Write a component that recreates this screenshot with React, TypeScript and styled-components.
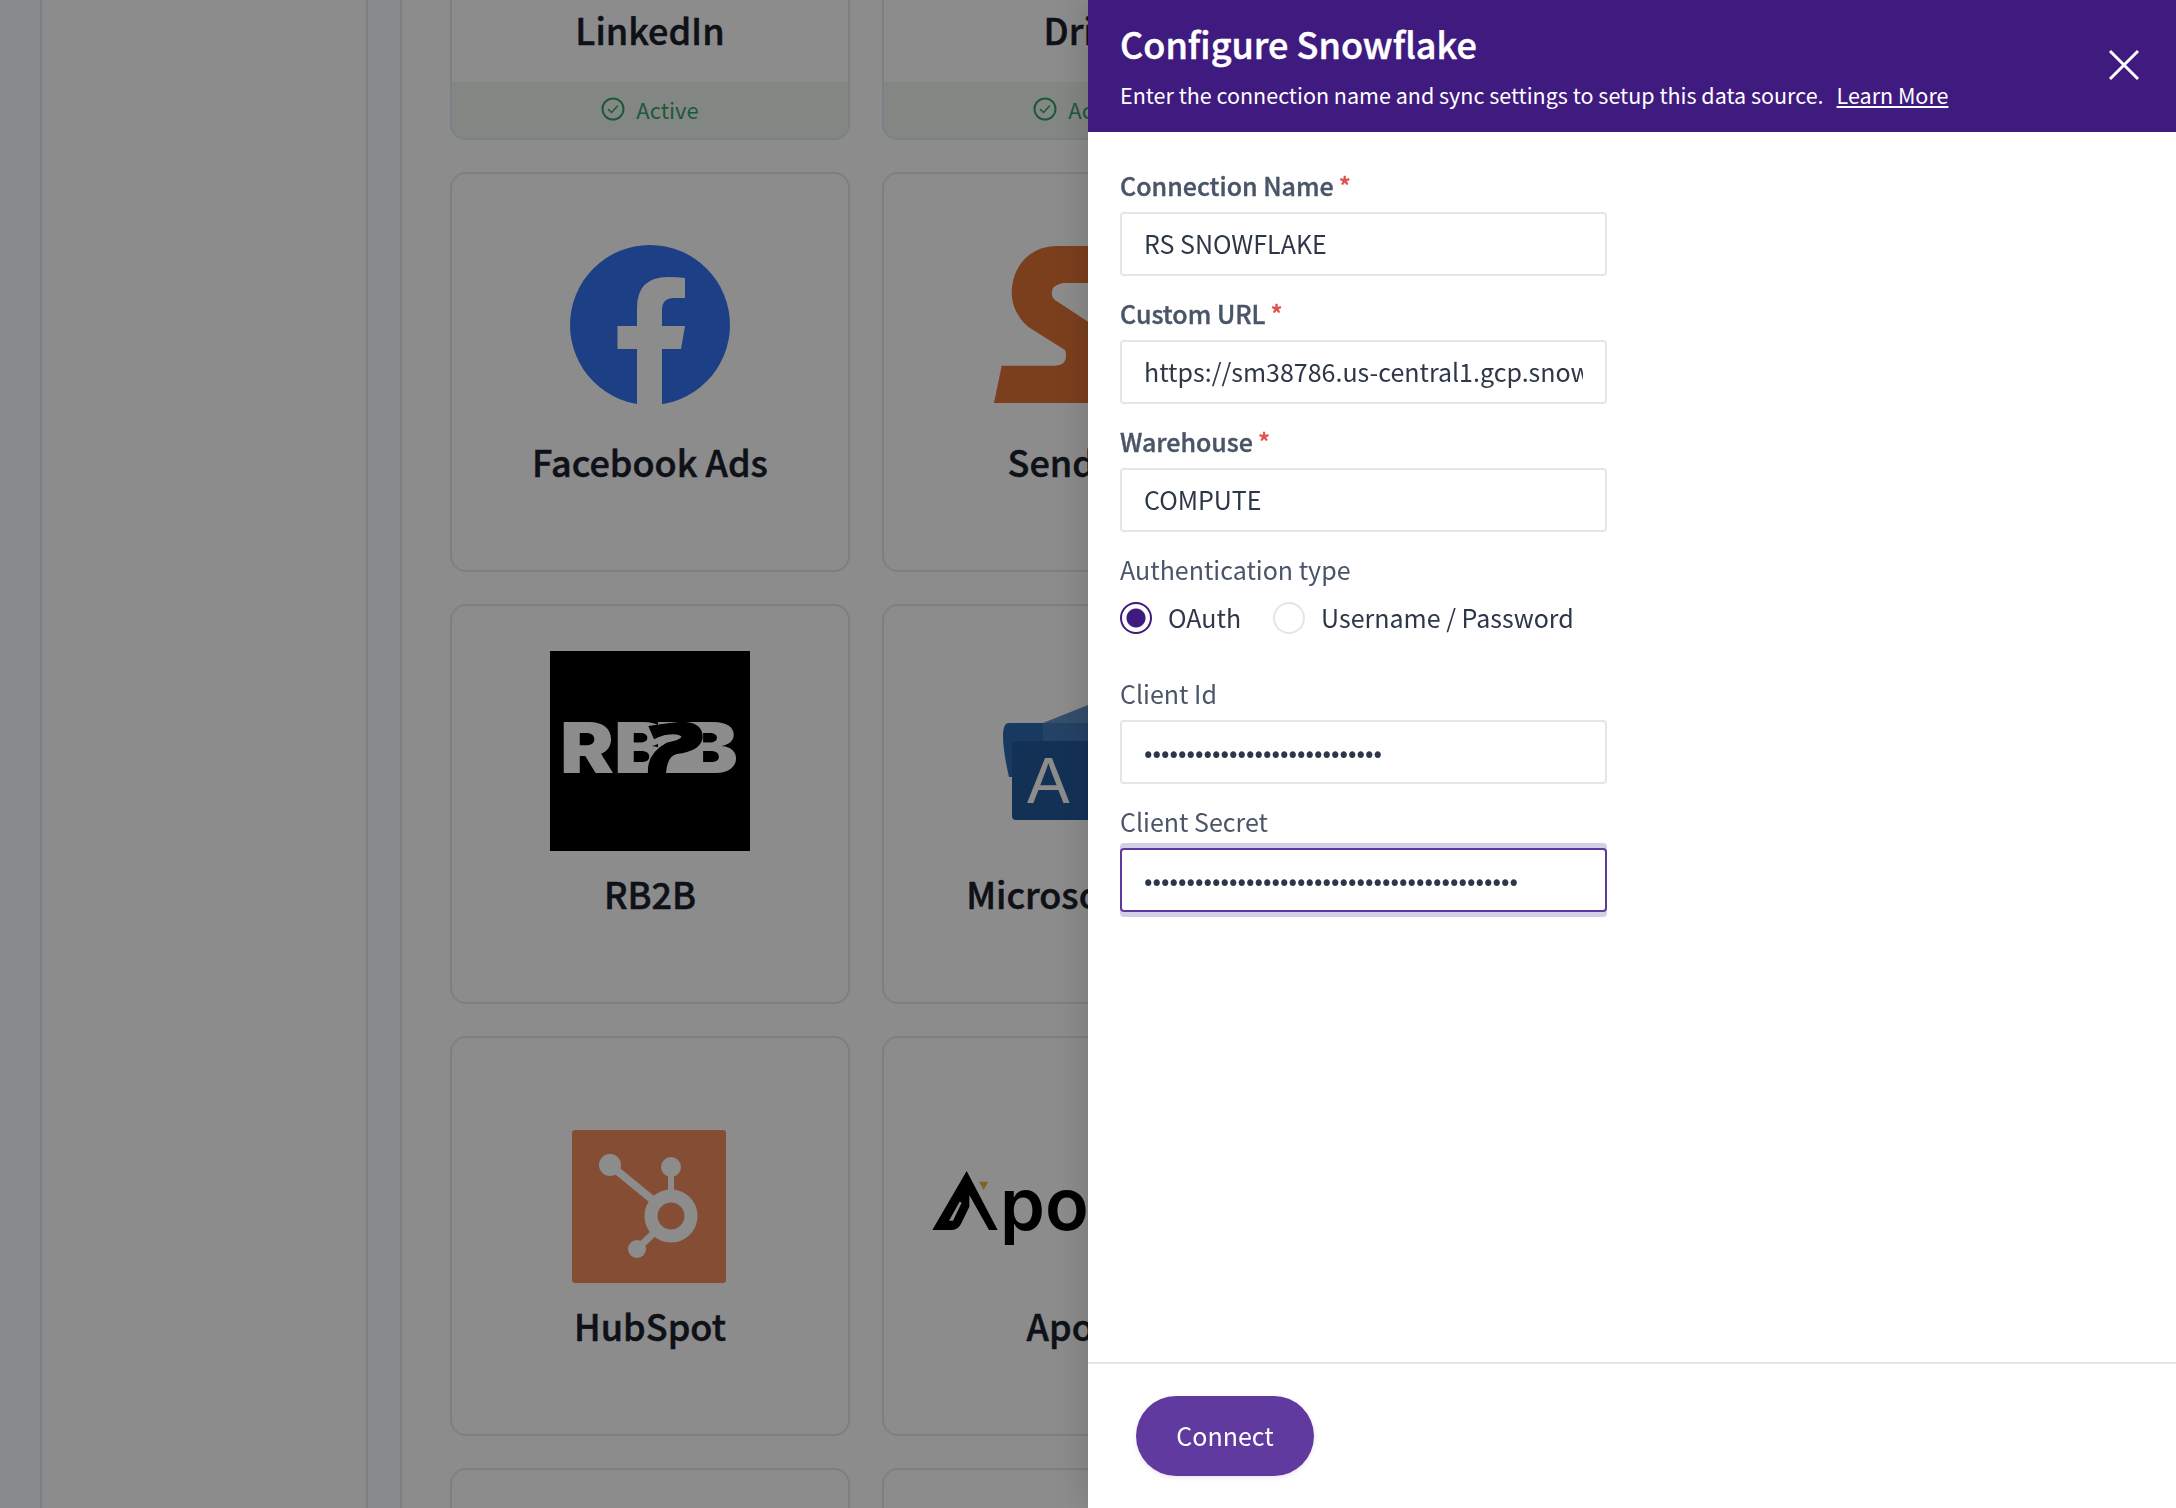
import React from 'react';
import styled, { createGlobalStyle } from 'styled-components';

const Global = createGlobalStyle`
  html, body { margin: 0; padding: 0; height: 100%; background: #fff; }
  body { font-family: "Noto Sans CJK JP", "Open Sans", sans-serif; overflow: hidden; }
  * { box-sizing: border-box; }
`;

const Page = styled.div`
  display: flex;
  height: 1508px;
  overflow: hidden;
  background: #f7fafc;
`;
const Rail = styled.div`
  width: 42px;
  flex: none;
  border-right: 2px solid #e2e8f0;
`;
const Sidebar = styled.div`
  width: 326px;
  flex: none;
  background: #fff;
  border-right: 2px solid #e2e8f0;
`;
const Gutter = styled.div`
  width: 34px;
  flex: none;
  border-right: 2px solid #e2e8f0;
`;
const Content = styled.main`
  flex: 1;
  background: #fff;
  padding: 0 0 0 48px;
  overflow: hidden;
`;
const Grid = styled.div`
  display: grid;
  grid-template-columns: repeat(2, 400px);
  grid-auto-rows: 400px;
  column-gap: 32px;
  row-gap: 32px;
  margin-top: -260px;
`;
const Card = styled.article`
  display: flex;
  flex-direction: column;
  align-items: center;
  border: 2px solid #e2e8f0;
  border-radius: 16px;
  overflow: hidden;
  background: #fff;
`;
const LogoSlot = styled.div`
  height: 200px;
  margin-top: 45px;
  flex: none;
  display: flex;
  justify-content: center;
`;
const LogoSvg = styled.svg`
  display: block;
  overflow: visible;
  flex: none;
`;
const CardName = styled.h3`
  margin: 20px 0 0;
  font-size: 36px;
  line-height: 44px;
  font-weight: 500;
  -webkit-text-stroke: 0.5px currentColor;
  color: #1a202c;
  white-space: nowrap;
`;
const StatusBand = styled.div`
  margin-top: auto;
  align-self: stretch;
  height: 56px;
  padding-bottom: 3px;
  display: flex;
  align-items: center;
  justify-content: center;
  gap: 11px;
  background: #eff6f0;
  color: #38a169;
  font-size: 22px;
`;
const Overlay = styled.div`
  position: fixed;
  inset: 0;
  background: rgba(0, 0, 0, 0.45);
`;
const Drawer = styled.aside`
  position: fixed;
  top: 0;
  right: 0;
  bottom: 0;
  width: 1088px;
  display: flex;
  flex-direction: column;
  background: #fff;
  box-shadow: -6px 0 32px rgba(0, 0, 0, 0.14);
`;
const DrawerHeader = styled.header`
  position: relative;
  height: 132px;
  flex: none;
  padding: 20px 32px 0;
  background: #3f1a7f;
  color: #fff;
`;
const Title = styled.h2`
  margin: 0;
  font-size: 36px;
  line-height: 46px;
  font-weight: 500;
  -webkit-text-stroke: 0.5px currentColor;
`;
const Subtitle = styled.p`
  margin: 13px 0 0;
  font-size: 21.5px;
  line-height: 32px;
  white-space: nowrap;
`;
const LearnMore = styled.a`
  margin-left: 13px;
  color: #fff;
  text-decoration: underline;
`;
const CloseButton = styled.button`
  position: absolute;
  top: 48px;
  right: 35px;
  width: 34px;
  height: 34px;
  padding: 0;
  border: 0;
  background: none;
  color: #fff;
`;
const DrawerBody = styled.form`
  flex: 1;
  padding: 36px 32px 0;
  display: flex;
  flex-direction: column;
  gap: 20px;
  width: 551px;
  overflow: hidden;
`;
const Field = styled.div`
  display: flex;
  flex-direction: column;
`;
const Label = styled.label<{ $strong?: boolean }>`
  font-size: 25px;
  line-height: 34px;
  margin-bottom: 10px;
  font-weight: ${p => (p.$strong ? 500 : 400)};
  -webkit-text-stroke: ${p => (p.$strong ? '0.4px currentColor' : '0')};
  color: #4a5568;
`;
const Star = styled.span`
  color: #e2504c;
  margin-left: 5px;
`;
const TextInput = styled.input<{ $focused?: boolean }>`
  width: 487px;
  height: 64px;
  padding: 0 22px 2px;
  font-family: inherit;
  font-size: 25px;
  color: #2d3748;
  background: #fff;
  border: 2px solid ${p => (p.$focused ? '#5b3a9e' : '#e2e5ea')};
  border-radius: 4px;
  outline: none;
  box-shadow: ${p => (p.$focused ? '0 5px 0 #d6cde6, 0 -5px 0 #d6cde6' : 'none')};
`;
const RadioRow = styled.div`
  display: flex;
  align-items: center;
  height: 44px;
  margin-bottom: 16px;
`;
const RadioItem = styled.div`
  display: flex;
  align-items: center;
  gap: 16px;
  margin-right: 32px;
  padding-bottom: 2px;
  font-size: 25px;
  line-height: 36px;
  color: #2d3748;
  white-space: nowrap;
`;
const RadioDot = styled.span<{ $on?: boolean }>`
  width: 32px;
  height: 32px;
  margin-bottom: -2px;
  flex: none;
  border-radius: 50%;
  border: 2px solid ${p => (p.$on ? '#3f1a7f' : '#e2e5ea')};
  background: ${p => (p.$on ? 'radial-gradient(circle, #3f1a7f 0 9px, #fff 10px)' : '#fff')};
`;
const DrawerFooter = styled.footer`
  flex: none;
  height: 146px;
  padding: 32px 48px;
  border-top: 2px solid #e2e5ea;
`;
const ConnectButton = styled.button`
  width: 178px;
  height: 80px;
  padding: 0 0 2px;
  border: 0;
  border-radius: 40px;
  background: #613a9f;
  color: #fff;
  font-family: inherit;
  font-size: 25px;
  box-shadow: 0 2px 4px rgba(97, 58, 159, 0.12);
`;

const Logo = ({ w = 200, children }: { w?: number; children?: React.ReactNode }) => (
  <LogoSlot>
    <LogoSvg width={w} height={200} viewBox={`0 0 ${w} 200`}>{children}</LogoSvg>
  </LogoSlot>
);

const FacebookLogo = () => (
  <Logo>
    <circle cx="100" cy="106" r="80" fill="#3674f2" />
    <path d="M87 187V130H67.5V107H87V89Q87 58 118 58Q128 58 135 59V79H124Q112 79 112 91V107H135L131 130H112V187Z" fill="#fff" />
  </Logo>
);
const SendosoLogo = () => (
  <Logo>
    <path d="M12 184L19.7 146.7H73Q84 146 84 137.7Q84 133 83 131L48 109C38 102 29.7 88 29.7 74C30 45 50 27 74.7 27H120V64H81Q69.7 66 69.7 74Q70 79 73 81L120 112V184Z" fill="#e07335" />
  </Logo>
);
const Rb2bLogo = () => (
  <Logo>
    <rect width="200" height="200" fill="#000" />
    <text x="10" y="122" fontFamily="Inter" fontWeight="900" fontSize="70" fill="#fff" textLength="108" lengthAdjust="spacingAndGlyphs">RB</text>
    <text x="133" y="122" fontFamily="Inter" fontWeight="900" fontSize="70" fill="#fff" textLength="55" lengthAdjust="spacingAndGlyphs">B</text>
    <rect x="108" y="71" width="34" height="51" fill="#fff" />
    <g transform="translate(30 39) scale(0.3333)">
      <path d="M205 108Q270 97 310 95Q370 97 368 145Q360 185 290 192Q262 198 258 249H204Q200 190 260 158Q300 150 305 140Q295 128 255 135Q235 140 222 148Z" fill="#000" />
    </g>
  </Logo>
);
const AccessLogo = () => (
  <Logo>
    <path d="M61 72L106 54H230V120H61Z" fill="#5f8fc4" />
    <path d="M27 72H61V126H27Q21 100 21 85Q21 72 27 72Z" fill="#2f6bb0" />
    <rect x="61" y="72" width="170" height="40" fill="#4079b8" />
    <rect x="30" y="90" width="130" height="79" rx="4" fill="#235a9c" />
    <text x="45" y="152" fontFamily="Liberation Sans" fontSize="64" fill="#fff">A</text>
  </Logo>
);
const HubSpotLogo = () => (
  <Logo>
    <rect x="22" y="47" width="154" height="153" rx="3" fill="#f38f60" />
    <circle cx="121" cy="133" r="20" fill="none" stroke="#fff" strokeWidth="13" />
    <circle cx="121" cy="84" r="10" fill="#fff" />
    <rect x="118" y="84" width="6" height="28" fill="#fff" />
    <circle cx="60" cy="82" r="11" fill="#fff" />
    <path d="M60 82L104 118" stroke="#fff" strokeWidth="8" />
    <circle cx="87" cy="166" r="9" fill="#fff" />
    <path d="M87 166L106 148" stroke="#fff" strokeWidth="7" />
  </Logo>
);
const ApolloLogo = () => (
  <Logo w={300}>
    <g transform="translate(-7 77) scale(0.3333)">
      <path d="M125 33L218 210H192L133 105V140L108 192Q98 210 78 210H22Z" fill="#000" />
      <path d="M72 182L104 125L110 128L84 182Z" fill="#fff" />
      <path d="M162 65H190L176 90Z" fill="#e4b94a" />
    </g>
    <text x="68" y="147" fontFamily="Inter" fontWeight="600" fontSize="72" fill="#000">pollo</text>
  </Logo>
);

const ActiveBadge = () => (
  <StatusBand>
    <svg width="24" height="24" viewBox="0 0 24 24" fill="none" stroke="currentColor" strokeWidth="2" strokeLinecap="round" strokeLinejoin="round">
      <circle cx="12" cy="12" r="10.5" />
      <path d="M7.5 12.5L10.5 15.5L16.5 9" strokeWidth="1.6" />
    </svg>
    Active
  </StatusBand>
);

const App = () => (
  <>
    <Global />
    <Page>
      <Rail />
      <Sidebar />
      <Gutter />
      <Content>
        <Grid>
          <Card><Logo /><CardName>LinkedIn</CardName><ActiveBadge /></Card>
          <Card><Logo /><CardName>Drift</CardName><ActiveBadge /></Card>
          <Card><FacebookLogo /><CardName>Facebook Ads</CardName></Card>
          <Card><SendosoLogo /><CardName>Sendoso</CardName></Card>
          <Card><Rb2bLogo /><CardName>RB2B</CardName></Card>
          <Card><AccessLogo /><CardName>Microsoft Ads</CardName></Card>
          <Card><HubSpotLogo /><CardName>HubSpot</CardName></Card>
          <Card><ApolloLogo /><CardName>Apollo</CardName></Card>
          <Card />
          <Card />
        </Grid>
      </Content>
    </Page>
    <Overlay />
    <Drawer>
      <DrawerHeader>
        <Title>Configure Snowflake</Title>
        <Subtitle>
          Enter the connection name and sync settings to setup this data source.
          <LearnMore href="#">Learn More</LearnMore>
        </Subtitle>
        <CloseButton type="button" aria-label="Close">
          <svg width="34" height="34" viewBox="0 0 34 34" fill="none" stroke="currentColor" strokeWidth="3">
            <path d="M3 3L31 31M31 3L3 31" />
          </svg>
        </CloseButton>
      </DrawerHeader>
      <DrawerBody>
        <Field>
          <Label $strong>Connection Name<Star>*</Star></Label>
          <TextInput readOnly value="RS SNOWFLAKE" />
        </Field>
        <Field>
          <Label $strong>Custom URL<Star>*</Star></Label>
          <TextInput readOnly value="https://sm38786.us-central1.gcp.snowflakecomputing.com" />
        </Field>
        <Field>
          <Label $strong>Warehouse<Star>*</Star></Label>
          <TextInput readOnly value="COMPUTE" />
        </Field>
        <Field>
          <Label>Authentication type</Label>
          <RadioRow>
            <RadioItem><RadioDot $on />OAuth</RadioItem>
            <RadioItem><RadioDot />Username / Password</RadioItem>
          </RadioRow>
        </Field>
        <Field>
          <Label>Client Id</Label>
          <TextInput readOnly type="password" value={'x'.repeat(28)} />
        </Field>
        <Field>
          <Label>Client Secret</Label>
          <TextInput readOnly $focused type="password" value={'x'.repeat(44)} />
        </Field>
      </DrawerBody>
      <DrawerFooter>
        <ConnectButton type="button">Connect</ConnectButton>
      </DrawerFooter>
    </Drawer>
  </>
);

export default App;
